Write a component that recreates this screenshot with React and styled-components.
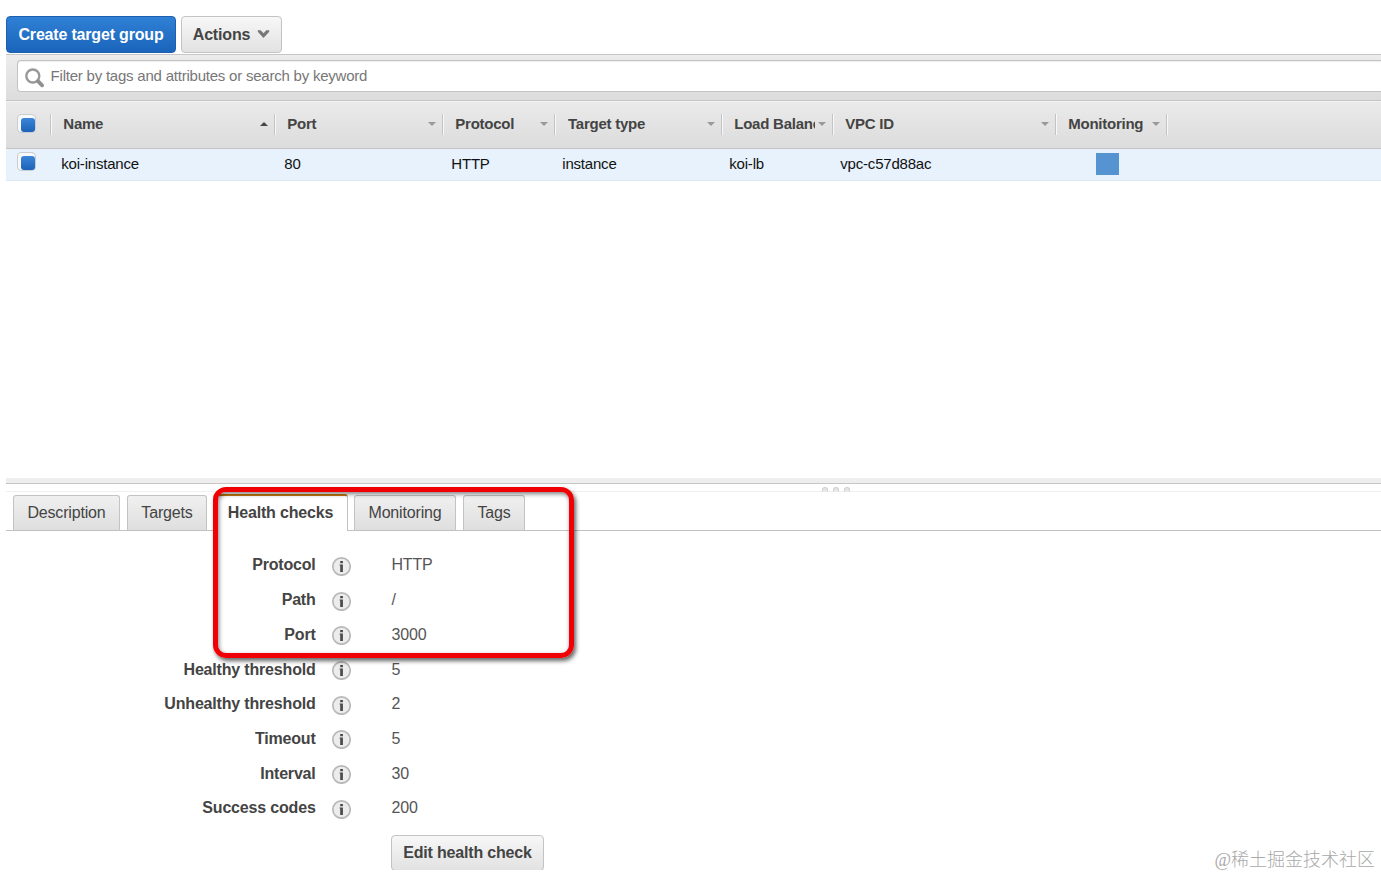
import React from 'react';
import styled, { createGlobalStyle, css } from 'styled-components';

const GlobalStyle = createGlobalStyle`
  * { box-sizing: border-box; }
  html, body { margin: 0; padding: 0; background: #fff; overflow: hidden; }
  body { font-family: "Liberation Sans", Arial, sans-serif; color: #444; }
`;

const Page = styled.main`
  position: relative;
  width: 1381px;
  height: 876px;
  padding-left: 6px;
  overflow: hidden;
  display: flex;
  flex-direction: column;
  background: #fff;
`;

const Toolbar = styled.div`
  display: flex;
  flex: none;
  gap: 5px;
  height: 54px;
  padding-top: 16px;
`;

const Button = styled.button`
  display: flex;
  align-items: center;
  justify-content: center;
  gap: 7px;
  width: ${(p) => p.$width}px;
  height: ${(p) => p.$height || 37}px;
  padding: 0;
  border: 1px solid #c3c3c3;
  border-radius: 4px;
  background: linear-gradient(#f7f7f7, #e2e2e2);
  color: #444;
  font: bold 16px/20px "Liberation Sans", Arial, sans-serif;
  letter-spacing: -0.18px;
  white-space: nowrap;
  ${(p) => p.$primary && css`
    border-color: #1c60ae;
    background: linear-gradient(#2f80d6, #1a65bb);
    color: #fff;
  `}
`;

const FilterBar = styled.div`
  flex: none;
  height: 47px;
  padding: 5px 0 0 11px;
  border-top: 1px solid #c6c6c6;
  border-bottom: 1px solid #c4c4c4;
  background: linear-gradient(#ececec, #dcdcdc);
`;

const SearchBox = styled.div`
  display: flex;
  align-items: center;
  height: 32px;
  padding-left: 7px;
  border: 1px solid #c3c3c3;
  border-right: 0;
  border-radius: 4px 0 0 4px;
  background: #fff;
  box-shadow: inset 0 1px 1px #eee;
`;

const SearchIcon = styled.svg`
  flex: none;
  width: 20px;
  height: 20px;
  margin-top: 3px;
`;

const Placeholder = styled.span`
  margin-left: 5.6px;
  color: #777;
  font-size: 15px;
  line-height: 20px;
  letter-spacing: -0.22px;
  white-space: nowrap;
`;

const gridColumns = css`
  display: grid;
  grid-template-columns: 45px 224px 168px 112px 167px 111px 223px 111px 1fr;
`;

const HeaderRow = styled.div`
  ${gridColumns}
  flex: none;
  height: 48px;
  padding-top: 12px;
  border-top: 1px solid #f3f3f3;
  border-bottom: 1px solid #c4c4c4;
  background: linear-gradient(#eaeaea, #dcdcdc);
`;

const HeaderCell = styled.div`
  display: flex;
  align-items: center;
  height: 21px;
  min-width: 0;
  padding: 0 6px 2px ${(p) => p.$pad || 12.3}px;
  border-right: 1px solid #c3c3c3;
  box-shadow: 1px 0 #f8f8f8;
  font-weight: bold;
  font-size: 15px;
  line-height: 20px;
  white-space: nowrap;
`;

const HeaderLabel = styled.span`
  flex: 1;
  min-width: 0;
  margin-right: 3px;
  overflow: hidden;
  letter-spacing: -0.25px;
`;

const SortArrow = styled.i`
  flex: none;
  border: 4.5px solid transparent;
  ${(p) => p.$up
    ? css`border-top: 0; border-bottom-color: #444;`
    : css`border-bottom: 0; border-top-color: #999;`}
`;

const DataRow = styled.div`
  ${gridColumns}
  flex: none;
  height: 32px;
  padding-top: 4px;
  border-bottom: 1px solid #dce8f1;
  background: #e7f2fd;
`;

const Cell = styled.div`
  padding-left: ${(p) => p.$pad}px;
  color: #111;
  font-size: 15px;
  line-height: 21px;
  white-space: nowrap;
  letter-spacing: -0.2px;
`;

const Checkbox = styled.span`
  display: block;
  flex: none;
  width: 19px;
  height: 19px;
  margin-top: ${(p) => p.$top || 0}px;
  padding: 3px 0 0 3px;
  border: 1px solid #c9cdd0;
  border-radius: 4px;
  background: #f6f8fa;
  &::after {
    content: "";
    display: block;
    width: 14px;
    height: 14px;
    border-radius: 3px;
    background: linear-gradient(#3b86d9, #1d62b8);
  }
`;

const Swatch = styled.span`
  display: block;
  width: 23px;
  height: 22px;
  background: #5594d0;
`;

const EmptyArea = styled.div`
  flex: none;
  height: 297px;
`;

const Splitter = styled.div`
  display: flex;
  flex-direction: column;
  flex: none;
  height: 14px;
  border-bottom: 1px solid #efefef;
`;

const SplitterEdge = styled.div`
  flex: none;
  height: 6px;
  border-bottom: 1px solid #c6c6c6;
  background: #eee;
`;

const Grip = styled.div`
  display: flex;
  gap: 5px;
  padding: 3px 0 0 816px;
  i {
    width: 6px;
    height: 5px;
    border: 1px solid #d0d0d0;
    border-bottom-color: #eee;
    border-radius: 3px 3px 0 0;
    background: #e6e6e6;
  }
`;

const TabStrip = styled.div`
  display: flex;
  align-items: flex-end;
  flex: none;
  height: 39px;
  padding-left: 7px;
  border-bottom: 1px solid #c1c1c1;
`;

const Tab = styled.div`
  width: ${(p) => p.$width}px;
  height: 35px;
  margin-right: ${(p) => p.$gap}px;
  border: 1px solid #c3c3c3;
  border-bottom: 0;
  border-radius: 3px 3px 0 0;
  background: linear-gradient(#f0f0f0, #dfdfdf);
  font-size: 16px;
  line-height: 33px;
  text-align: center;
  letter-spacing: -0.17px;
  white-space: nowrap;
  ${(p) => p.$active && css`
    height: 37px;
    margin-bottom: -1px;
    border-top: 2px solid #c2750f;
    background: #fff;
    font-weight: bold;
    line-height: 34px;
  `}
`;

const Details = styled.dl`
  flex: none;
  margin: 0;
  padding-top: 16.4px;
`;

const DetailRow = styled.div`
  display: grid;
  grid-template-columns: 310px 75px 1fr;
  height: 34.72px;
  font-size: 16px;
  line-height: 35px;
`;

const Term = styled.dt`
  font-weight: bold;
  text-align: right;
  letter-spacing: -0.18px;
  padding-right: 0.4px;
  white-space: nowrap;
`;

const Value = styled.dd`
  margin: 0;
  padding-left: 0.4px;
  color: #555;
  letter-spacing: -0.15px;
`;

const Info = styled.svg`
  display: block;
  width: 20px;
  height: 20px;
  margin: 8.5px 0 0 15px;
`;

const ActionArea = styled.div`
  flex: none;
  height: 45px;
  padding: 10px 0 0 385px;
  overflow: hidden;
`;

const Highlight = styled.div`
  position: absolute;
  left: 213px;
  top: 487px;
  width: 361px;
  height: 171px;
  border: 5px solid #f00004;
  border-radius: 13px;
  box-shadow: 2px 3px 4px rgba(0, 0, 0, 0.6), inset 1px 2px 4px rgba(0, 0, 0, 0.5);
`;

const Watermark = styled.div`
  position: absolute;
  right: 6px;
  bottom: 4px;
  color: #a9a9a9;
  font: 300 18px/24px "Liberation Serif", "Noto Sans CJK SC", serif;
  white-space: nowrap;
`;

const columns = [
  { label: 'Name', up: true },
  { label: 'Port' },
  { label: 'Protocol' },
  { label: 'Target type', pad: 13 },
  { label: 'Load Balancer' },
  { label: 'VPC ID' },
  { label: 'Monitoring' },
];

const cells = [
  ['koi-instance', 10.3],
  ['80', 9.3],
  ['HTTP', 8.3],
  ['instance', 7.3],
  ['koi-lb', 7.3],
  ['vpc-c57d88ac', 7.3],
];

const tabs = [
  { label: 'Description', width: 107, gap: 7 },
  { label: 'Targets', width: 80, gap: 6 },
  { label: 'Health checks', width: 135, gap: 6, active: true },
  { label: 'Monitoring', width: 102, gap: 7 },
  { label: 'Tags', width: 62, gap: 0 },
];

const details = [
  ['Protocol', 'HTTP'],
  ['Path', '/'],
  ['Port', '3000'],
  ['Healthy threshold', '5'],
  ['Unhealthy threshold', '2'],
  ['Timeout', '5'],
  ['Interval', '30'],
  ['Success codes', '200'],
];

function InfoIcon() {
  return (
    <Info viewBox="0 0 20 20">
      <circle cx="10.5" cy="10.5" r="8.7" fill="#ececec" stroke="#b8b8b8" strokeWidth="1.7" />
      <path d="M9.2 4.9h2.7v2.4H9.2zM8.6 8.5h3.3v7.6H9.2V9.6h-.6z" fill="#4a4a4a" />
    </Info>
  );
}

export default function App() {
  return (
    <Page>
      <GlobalStyle />
      <Toolbar>
        <Button $primary $width={170}>Create target group</Button>
        <Button $width={101}>
          Actions
          <svg width="13" height="12" viewBox="0 0 13 12">
            <path d="M.8 1.2h2.8l2.9 3 2.9-3h2.8v1.6L6.5 9 .8 2.8z" fill="#777" />
          </svg>
        </Button>
      </Toolbar>
      <FilterBar>
        <SearchBox>
          <SearchIcon viewBox="0 0 20 20">
            <circle cx="7.8" cy="8" r="6.5" fill="none" stroke="#999" strokeWidth="2.4" />
            <path d="M13 13.2l4.1 4.1" stroke="#909090" strokeWidth="3.8" strokeLinecap="round" />
          </SearchIcon>
          <Placeholder>Filter by tags and attributes or search by keyword</Placeholder>
        </SearchBox>
      </FilterBar>
      <HeaderRow>
        <HeaderCell $pad={11}><Checkbox /></HeaderCell>
        {columns.map((c) => (
          <HeaderCell key={c.label} $pad={c.pad}>
            <HeaderLabel>{c.label}</HeaderLabel>
            <SortArrow $up={c.up} />
          </HeaderCell>
        ))}
      </HeaderRow>
      <DataRow>
        <Cell $pad={11}><Checkbox $top={-1} /></Cell>
        {cells.map(([text, pad]) => <Cell key={text} $pad={pad}>{text}</Cell>)}
        <Cell $pad={40}><Swatch /></Cell>
      </DataRow>
      <EmptyArea />
      <Splitter>
        <SplitterEdge />
        <Grip><i /><i /><i /></Grip>
      </Splitter>
      <TabStrip>
        {tabs.map((t) => (
          <Tab key={t.label} $width={t.width} $gap={t.gap} $active={t.active}>{t.label}</Tab>
        ))}
      </TabStrip>
      <Details>
        {details.map(([term, value]) => (
          <DetailRow key={term}>
            <Term>{term}</Term>
            <InfoIcon />
            <Value>{value}</Value>
          </DetailRow>
        ))}
      </Details>
      <ActionArea>
        <Button $width={153} $height={36}>Edit health check</Button>
      </ActionArea>
      <Highlight />
      <Watermark>@稀土掘金技术社区</Watermark>
    </Page>
  );
}
